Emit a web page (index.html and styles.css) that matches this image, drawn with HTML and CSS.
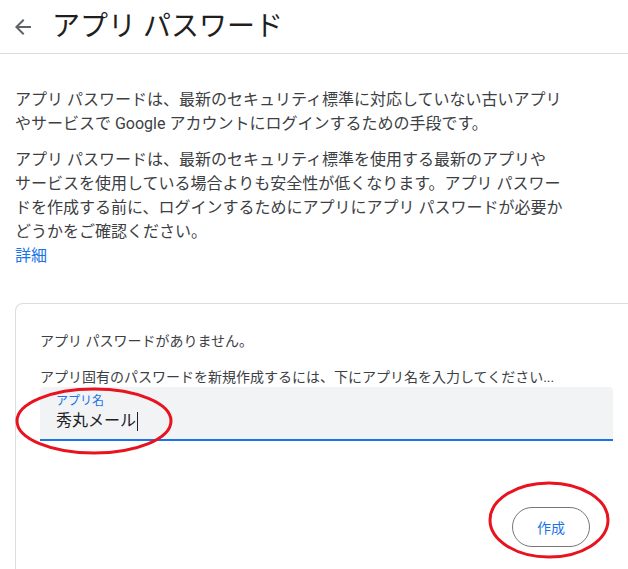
FILE: index.html
```html
<!DOCTYPE html>
<html lang="ja">
  <head>
    <meta charset="UTF-8" />
    <meta name="viewport" content="width=device-width, initial-scale=1.0" />
    <title>アプリ パスワード</title>
    <link rel="stylesheet" href="styles.css">
  </head>
  <body>
    <header class="top">
      <button class="back" aria-label="戻る">
        <svg viewBox="0 0 24 24" width="24" height="24">
          <path d="M20 11H7.83l5.59-5.59L12 4l-8 8 8 8 1.41-1.41L7.83 13H20v-2z" fill="#5f6368" />
        </svg>
      </button>
      <h1 class="title">アプリ パスワード</h1>
    </header>

    <main class="content">
      <p class="desc">アプリ パスワードは、最新のセキュリティ標準に対応していない古いアプリやサービスで Google アカウントにログインするための手段です。</p>
      <p class="desc">アプリ パスワードは、最新のセキュリティ標準を使用する最新のアプリやサービスを使用している場合よりも安全性が低くなります。アプリ パスワードを作成する前に、ログインするためにアプリにアプリ パスワードが必要かどうかをご確認ください。<br><a class="more" href="#">詳細</a></p>

      <section class="card">
        <p class="card-text">アプリ パスワードがありません。</p>
        <p class="card-text">アプリ固有のパスワードを新規作成するには、下にアプリ名を入力してください...</p>
        <div class="field">
          <label class="field-label">アプリ名</label>
          <div class="field-value">秀丸メール<span class="caret"></span></div>
        </div>
        <div class="actions">
          <button class="create">作成</button>
        </div>
      </section>
    </main>

    <!-- 赤丸の注釈 -->
    <svg class="mark mark-field" viewBox="0 0 160 70" width="160" height="70">
      <ellipse cx="80" cy="35" rx="77" ry="32" fill="none" stroke="#e8131f" stroke-width="3" />
    </svg>
    <svg class="mark mark-button" viewBox="0 0 124 80" width="124" height="80">
      <ellipse cx="62" cy="40" rx="59" ry="37" fill="none" stroke="#e8131f" stroke-width="3" />
    </svg>
  </body>
</html>
```

FILE: styles.css
```css
html,
body {
  margin: 0;
  padding: 0;
  overflow: hidden;
  background: #fff;
}
body {
  position: relative;
  width: 628px;
  height: 569px;
  font-family: Roboto, "Noto Sans CJK JP", sans-serif;
  color: #3c4043;
  line-break: strict;
}
.top {
  display: flex;
  align-items: center;
  height: 53px;
  border-bottom: 1px solid #dadce0;
}
.back {
  display: flex;
  padding: 0;
  margin: 0 17px 0 11px;
  border: none;
  background: none;
}
.title {
  margin: 0;
  font-size: 28px;
  font-weight: 400;
  line-height: 36px;
  color: #1f1f1f;
}
.content {
  padding: 34px 0 0 15px;
}
.desc {
  margin: 0 0 12px;
  width: 556px;
  font-size: 16px;
  line-height: 24px;
}
.more {
  color: #1a73e8;
  text-decoration: none;
}
/* カードは画面の右と下にはみ出している */
.card {
  margin-top: 35px;
  width: 574px;
  height: 238px;
  padding: 27px 24px 0;
  border: 1px solid #dadce0;
  border-bottom: none;
  border-radius: 8px 8px 0 0;
}
.card-text {
  margin: 0 0 16px;
  font-size: 14px;
  line-height: 20px;
  color: #3c4043;
  white-space: nowrap;
}
.card-text + .card-text {
  margin-bottom: 0;
}
.field {
  display: flex;
  flex-direction: column;
  width: 573px;
  padding: 6px 16px 6px;
  box-sizing: border-box;
  background: #f1f3f4;
  border-radius: 4px 4px 0 0;
  border-bottom: 2px solid #1a73e8;
}
.field-label {
  font-size: 12px;
  line-height: 16px;
  color: #1a73e8;
}
.field-value {
  display: flex;
  align-items: center;
  font-size: 16px;
  line-height: 24px;
  color: #202124;
}
.caret {
  width: 1px;
  height: 19px;
  margin-left: 1px;
  background: #202124;
}
.actions {
  display: flex;
  justify-content: flex-end;
  width: 573px;
  margin-top: 66px;
}
.create {
  width: 78px;
  height: 40px;
  margin-right: 23px;
  border: 1px solid #747775;
  border-radius: 20px;
  background: #fff;
  font-family: Roboto, "Noto Sans CJK JP", sans-serif;
  font-size: 14px;
  color: #1a73e8;
}
.mark {
  position: absolute;
}
.mark-field {
  left: 14px;
  top: 386px;
}
.mark-button {
  left: 487px;
  top: 480px;
}
```
